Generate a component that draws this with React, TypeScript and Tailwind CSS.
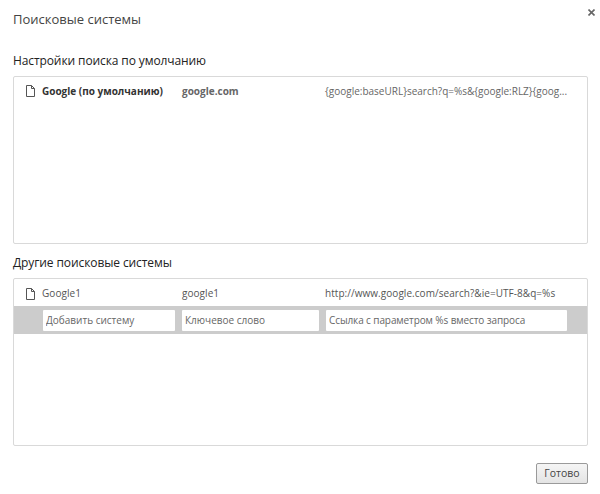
import React from 'react';

const FileIcon = () => (
  <svg width="9" height="12" viewBox="0 0 9 12" className="shrink-0">
    <path d="M0.5 0.5H5.5L8.5 3.5V11.5H0.5Z M5.5 0.5V3.5H8.5" fill="#fff" stroke="#555" strokeWidth="1" />
  </svg>
);

const App: React.FC = () => {
  return (
    <div className="w-[600px] h-[494px] bg-white relative overflow-hidden font-['Open_Sans','Liberation_Sans',sans-serif] text-[#333]">
      <button className="absolute right-[5px] top-[9px] flex">
        <svg width="7" height="7" viewBox="0 0 7 7">
          <path d="M0.5 0.5L6.5 6.5M6.5 0.5L0.5 6.5" stroke="#666" strokeWidth="1.6" />
        </svg>
      </button>

      <div className="flex flex-col px-[13px] w-[601px]">
        <h1 className="text-[13px] leading-[18px] pt-[10px] h-[28px] text-[#444] font-normal">Поисковые системы</h1>

        <h2 className="mt-[24px] text-[12px] tracking-[-0.1px] leading-[18px] text-[#222] font-normal">Настройки поиска по умолчанию</h2>
        <div className="mt-[6px] h-[168px] w-[575px] border border-[#d9d9d9] rounded-[2px]">
          <div className="flex items-center h-[27px] pt-[2px] text-[10px] font-bold text-[#333]">
            <div className="w-[28px] pl-[12px] flex -mt-[2px]"><FileIcon /></div>
            <span className="w-[140px]">Google (по умолчанию)</span>
            <span className="w-[143px] text-[#666]">google.com</span>
            <span className="font-normal text-[#666] whitespace-nowrap">{'{google:baseURL}search?q=%s&{google:RLZ}{goog...'}</span>
          </div>
        </div>

        <h2 className="mt-[10px] text-[12px] tracking-[-0.1px] leading-[18px] text-[#222] font-normal">Другие поисковые системы</h2>
        <div className="mt-[6px] h-[168px] w-[575px] border border-[#d9d9d9] rounded-[2px]">
          <div className="flex items-center h-[27px] pt-[2px] text-[10px] text-[#555]">
            <div className="w-[28px] pl-[12px] flex"><FileIcon /></div>
            <span className="w-[140px] tracking-[0.05px]">Google1</span>
            <span className="w-[143px] tracking-[0.05px]">google1</span>
            <span className="whitespace-nowrap tracking-[0.05px]">http://www.google.com/search?&amp;ie=UTF-8&amp;q=%s</span>
          </div>
          <div className="flex items-center h-[28px] bg-[#cccccc] pl-[29px] gap-[7px] text-[10px]">
            <input placeholder="Добавить систему" className="w-[132px] h-[21px] bg-white px-[3px] rounded-[1px] outline-none placeholder:text-[#666]" />
            <input placeholder="Ключевое слово" className="w-[137px] h-[21px] bg-white px-[3px] rounded-[1px] outline-none placeholder:text-[#666]" />
            <input placeholder="Ссылка с параметром %s вместо запроса" className="w-[241px] h-[21px] bg-white px-[3px] tracking-[-0.1px] rounded-[1px] outline-none placeholder:text-[#666]" />
          </div>
        </div>

        <div className="mt-[17px] flex justify-end w-[575px]">
          <button className="w-[52px] h-[21px] border border-[#9a9a9a] rounded-[2px] bg-gradient-to-b from-[#f5f5f5] to-[#e4e4e4] text-[10.5px] text-[#444]">Готово</button>
        </div>
      </div>
    </div>
  );
};

export default App;
